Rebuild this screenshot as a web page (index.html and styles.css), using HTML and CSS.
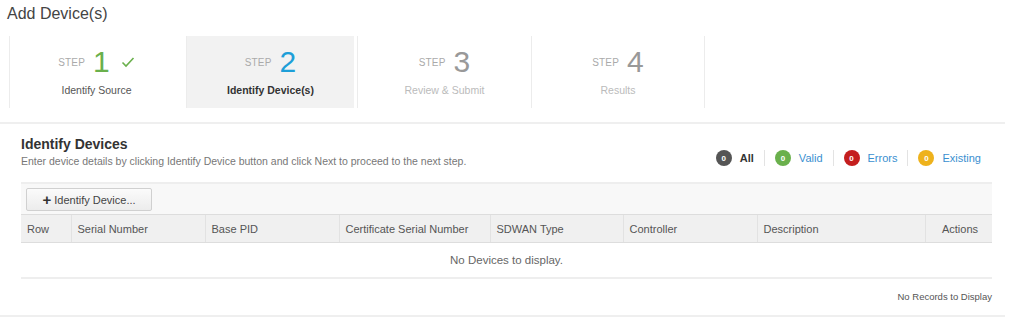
FILE: index.html
```html
<!DOCTYPE html>
<html lang="en">
<head>
    <meta charset="UTF-8">
    <title>Add Device(s)</title>
    <link rel="stylesheet" href="styles.css">
</head>
<body>
    <h1 class="page-title">Add Device(s)</h1>

    <div class="steps">
        <div class="step done">
            <div class="step-head"><span class="step-word">STEP</span><span class="step-num">1</span>
                <svg class="check" width="14" height="12" viewBox="0 0 14 12"><path d="M1.5 6.5 L5 10 L12.5 2" fill="none" stroke="#6ab04c" stroke-width="1.6"/></svg>
            </div>
            <div class="step-label">Identify Source</div>
        </div>
        <div class="step active">
            <div class="step-head"><span class="step-word">STEP</span><span class="step-num">2</span></div>
            <div class="step-label">Identify Device(s)</div>
        </div>
        <div class="step">
            <div class="step-head"><span class="step-word">STEP</span><span class="step-num">3</span></div>
            <div class="step-label">Review &amp; Submit</div>
        </div>
        <div class="step">
            <div class="step-head"><span class="step-word">STEP</span><span class="step-num">4</span></div>
            <div class="step-label">Results</div>
        </div>
    </div>

    <div class="section">
        <div class="section-top">
            <div>
                <h2>Identify Devices</h2>
                <p class="hint">Enter device details by clicking Identify Device button and click Next to proceed to the next step.</p>
            </div>
            <div class="filters">
                <span class="filter"><span class="badge dark">0</span><b>All</b></span>
                <span class="filter"><span class="badge green">0</span><a>Valid</a></span>
                <span class="filter"><span class="badge red">0</span><a>Errors</a></span>
                <span class="filter"><span class="badge yellow">0</span><a>Existing</a></span>
            </div>
        </div>

        <div class="grid">
            <div class="toolbar">
                <button class="btn"><span class="plus">+</span> Identify Device...</button>
            </div>
            <table>
                <colgroup>
                    <col style="width:50px"><col style="width:134px"><col style="width:134px"><col style="width:151px">
                    <col style="width:133px"><col style="width:134px"><col style="width:168px"><col>
                </colgroup>
                <thead>
                    <tr>
                        <th>Row</th><th>Serial Number</th><th>Base PID</th><th>Certificate Serial Number</th>
                        <th>SDWAN Type</th><th>Controller</th><th>Description</th><th class="right">Actions</th>
                    </tr>
                </thead>
                <tbody>
                    <tr><td colspan="8" class="empty">No Devices to display.</td></tr>
                </tbody>
            </table>
            <div class="footer">No Records to Display</div>
        </div>
    </div>
</body>
</html>
```

FILE: styles.css
```css
body { margin: 0; font-family: "Liberation Sans", Arial, sans-serif; color: #444; background: #fff; }

.page-title { margin: 0; padding: 5px 0 0 7px; height: 31px; font-size: 16px; font-weight: normal; color: #444; }

.steps { display: flex; margin-left: 9px; height: 72px; }
.step { width: 174px; border-left: 1px solid #ececec; display: flex; flex-direction: column; align-items: center; box-sizing: border-box; padding-top: 12px; }
.step:last-child { border-right: 1px solid #ececec; }
.step.active { background: #f2f2f2; margin: 0 3px; width: 168px; }
.step-head { display: flex; align-items: center; height: 28px; }
.step-word { font-size: 10px; color: #aaa; margin-right: 8px; letter-spacing: 0.2px; }
.step-num { font-size: 30px; color: #999; line-height: 28px; }
.done .step-num { color: #6ab04c; }
.active .step-num { color: #1e9fd8; }
.check { margin-left: 11px; }
.step-label { font-size: 10.5px; color: #bbb; margin-top: 8px; }
.done .step-label { color: #555; }
.active .step-label { color: #333; font-weight: bold; }

.section { margin-top: 14px; border-top: 2px solid #efefef; border-bottom: 2px solid #efefef; margin-right: 19px; padding: 12px 0 13px 21px; }
.section-top { display: flex; justify-content: space-between; align-items: flex-end; padding-right: 24px; }
h2 { margin: 0; font-size: 14px; color: #333; }
.hint { margin: 3px 0 0; font-size: 10.5px; color: #777; }

.filters { display: flex; align-items: center; font-size: 11px; padding-bottom: 1px; }
.filter { display: flex; align-items: center; padding: 0 10px; border-left: 1px solid #e3e3e3; }
.filter:first-child { border-left: 0; }
.filter:last-child { padding-right: 0; }
.filter b { color: #333; }
.filter a { color: #3a8fd0; }
.badge { width: 16px; height: 16px; border-radius: 50%; color: #fff; font-size: 8px; font-weight: bold; display: inline-flex; align-items: center; justify-content: center; margin-right: 8px; }
.dark { background: #555; }
.green { background: #6ab04c; }
.red { background: #c41e1e; }
.yellow { background: #eeb21c; }

.grid { margin-top: 15px; width: 971px; }
.toolbar { background: #f8f8f8; border-top: 2px solid #eee; height: 32px; padding: 4px 0 0 5px; box-sizing: border-box; }
.btn { font-family: inherit; font-size: 11px; color: #444; height: 23px; width: 126px; border: 1px solid #d0d0d0; border-radius: 2px; background: linear-gradient(#fbfbfb, #ececec); padding: 0; }
.plus { font-size: 15px; font-weight: bold; color: #333; vertical-align: -1px; }

table { border-collapse: collapse; width: 100%; table-layout: fixed; font-size: 11px; }
th { background: #f0f0f0; font-weight: normal; color: #555; text-align: left; height: 27px; padding: 0 6px; border-top: 1px solid #ddd; border-bottom: 1px solid #ddd; border-left: 1px solid #e2e2e2; }
th:first-child { border-left: 0; }
th.right { text-align: right; padding-right: 14px; }
td.empty { text-align: center; color: #666; font-size: 11.5px; height: 34px; padding: 0; border-bottom: 2px solid #eee; }

.footer { text-align: right; font-size: 9.5px; color: #555; padding-top: 12px; }
```
